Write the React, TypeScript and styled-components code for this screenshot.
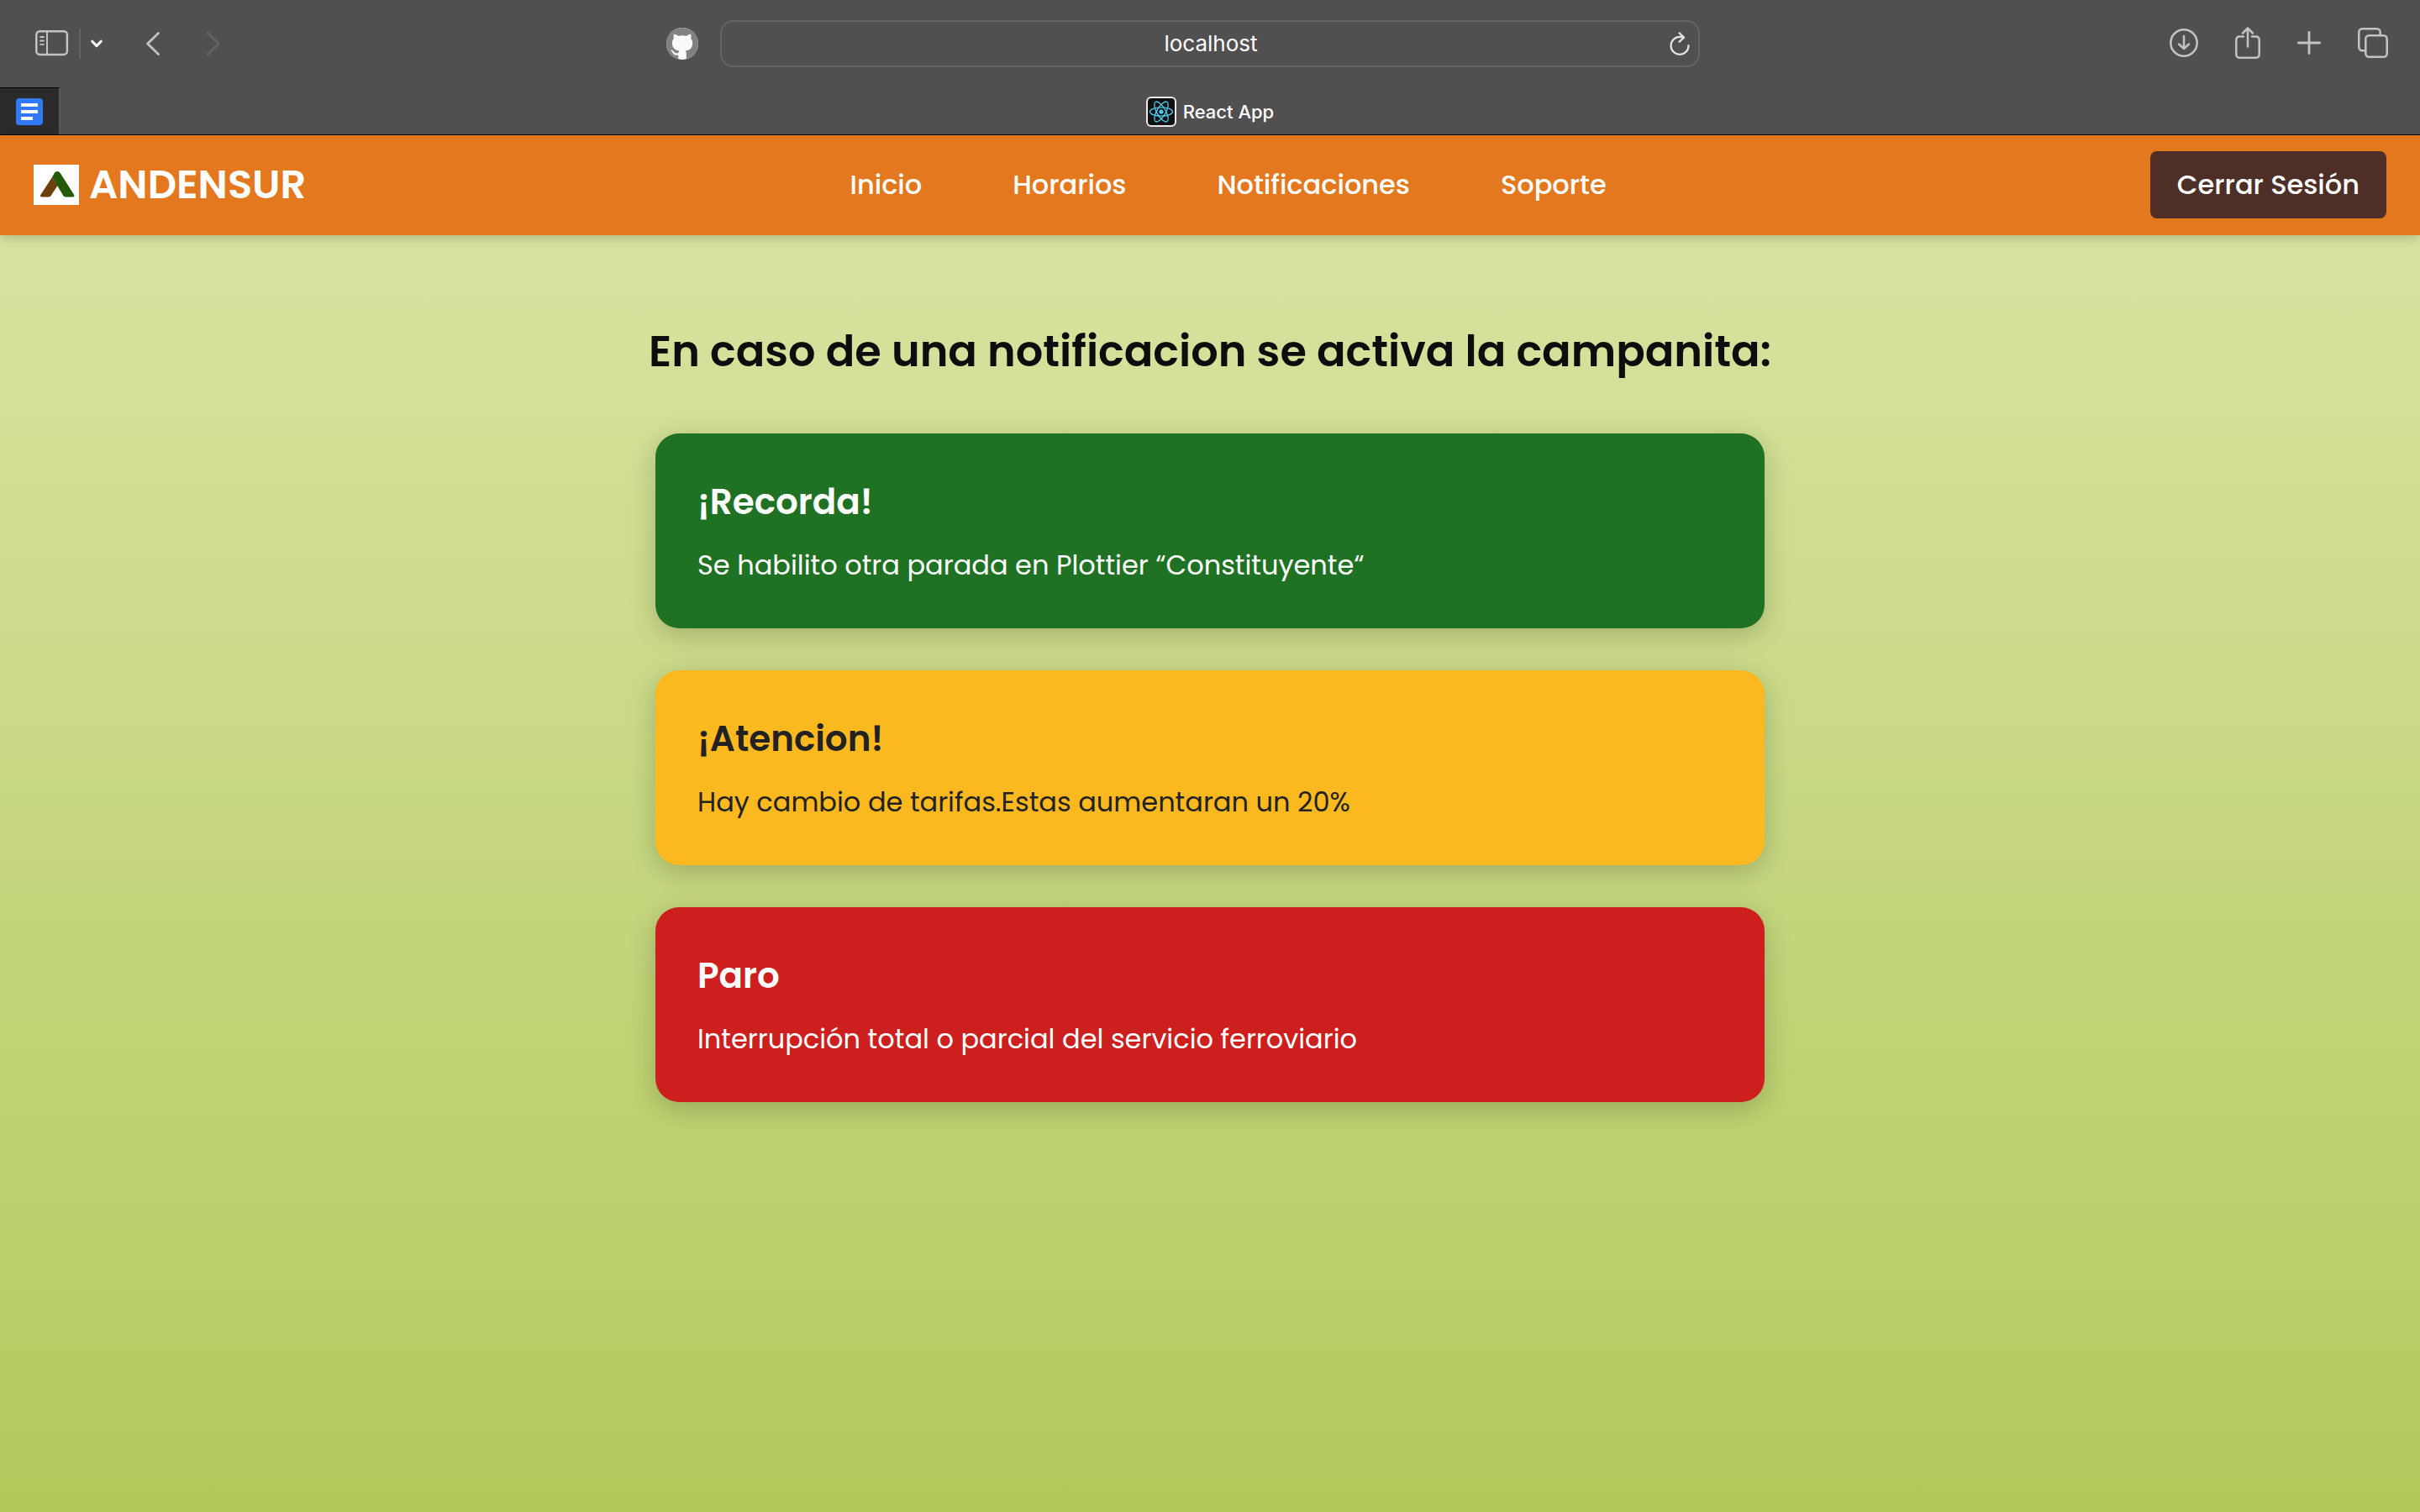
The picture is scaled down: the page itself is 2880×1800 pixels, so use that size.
import React from "react";
import styled, { createGlobalStyle } from "styled-components";

const brandFont = `Poppins, Inter, "Open Sans", sans-serif`;

const GlobalStyle = createGlobalStyle`
  *, *::before, *::after { box-sizing: border-box; }
  html, body, #root { height: 100%; }
  body {
    margin: 0;
    background: #b2ca5d;
    font-family: ${brandFont};
  }
  button { border: 0; padding: 0; background: none; font: inherit; color: inherit; cursor: pointer; }
  svg { display: block; }
`;

const Screen = styled.div`
  min-height: 100%;
  display: flex;
  flex-direction: column;
`;

/* Browser chrome */

const Chrome = styled.div`
  background: #524f50;
  border-bottom: 1px solid #000;
  color: #fff;
  font-family: Inter, sans-serif;
`;

const Toolbar = styled.div`
  display: grid;
  grid-template-columns: 1fr minmax(0, 1166px) 1fr;
  align-items: center;
  height: 104px;
  padding: 0 38px;
`;

const ToolGroup = styled.div<{ $gap: number }>`
  display: flex;
  align-items: center;
  gap: ${(p) => p.$gap}px;
`;

const LeftTools = styled.div`
  display: flex;
  align-items: center;
  justify-content: space-between;
  padding: 0 26px 0 4px;
`;

const RightTools = styled(ToolGroup)`
  justify-content: flex-end;
  padding-bottom: 2px;
`;

const IconButton = styled.button<{ $tone?: string }>`
  color: ${(p) => p.$tone ?? "#c4c2c3"};
  line-height: 0;
`;

const Divider = styled.span`
  width: 2px;
  height: 36px;
  background: #656364;
`;

const GithubBadge = styled.button`
  width: 38px;
  height: 38px;
  border-radius: 50%;
  background: #fafafa;
  color: #828081;
`;

const AddressBar = styled.label`
  display: flex;
  align-items: center;
  height: 56px;
  padding: 0 10px 0 36px;
  border: 2px solid #656364;
  border-radius: 16px;
`;

const AddressInput = styled.input`
  flex: 1;
  min-width: 0;
  border: 0;
  outline: 0;
  background: transparent;
  color: #fff;
  font: 400 26px/32px Inter, sans-serif;
  text-align: center;
`;

const TabRow = styled.div`
  display: grid;
  grid-template-columns: 72px 1fr 72px;
  height: 56px;
`;

const PinnedTab = styled.button`
  display: flex;
  align-items: center;
  justify-content: center;
  border-top: 1px solid #000;
  border-right: 2px solid #5a5758;
  background: #2c2b2b;
`;

const ActiveTab = styled.button`
  display: flex;
  align-items: center;
  justify-content: center;
  gap: 8px;
  padding-top: 2px;
  font-size: 22px;
  line-height: 28px;
  font-weight: 500;
`;

/* Site */

const Header = styled.header`
  position: relative;
  display: flex;
  align-items: center;
  justify-content: space-between;
  padding: 19px 40px 20px;
  background: #e4781e;
  color: #fff;
  box-shadow: 0 4px 12px rgba(0, 0, 0, 0.18);
`;

const Brand = styled.a`
  display: flex;
  align-items: center;
  gap: 12px;
  color: inherit;
  text-decoration: none;
  font-size: 48px;
  line-height: 72px;
  font-weight: 600;
`;

const Nav = styled.nav`
  display: flex;
  gap: 108px;
`;

const NavLink = styled.a`
  color: inherit;
  text-decoration: none;
  font-size: 32px;
  line-height: 48px;
  font-weight: 500;
`;

const LogoutButton = styled.button`
  padding: 16px 32px;
  border-radius: 8px;
  background: #4e2f27;
  font-size: 32px;
  line-height: 48px;
  font-weight: 500;
`;

const Main = styled.main`
  flex: 1;
  display: flex;
  flex-direction: column;
  align-items: center;
  gap: 60px;
  padding: 100px 40px;
  background: linear-gradient(#d8e3a0, #b2ca5c);
`;

const Title = styled.h1`
  margin: 0;
  color: #0d0d0d;
  font-size: 51px;
  line-height: 76px;
  font-weight: 600;
`;

const CardList = styled.section`
  display: flex;
  flex-direction: column;
  gap: 50px;
  width: 100%;
  max-width: 1320px;
`;

const Card = styled.article<{ $background: string; $color: string }>`
  display: flex;
  flex-direction: column;
  gap: 20px;
  padding: 50px;
  border-radius: 28px;
  background: ${(p) => p.$background};
  color: ${(p) => p.$color};
  box-shadow: 0 8px 32px rgba(0, 0, 0, 0.2);
`;

const CardTitle = styled.h2`
  margin: 0;
  font-size: 42px;
  line-height: 64px;
  font-weight: 600;
`;

const CardText = styled.p`
  margin: 0;
  padding-bottom: 2px;
  font-size: 32px;
  line-height: 46px;
`;

const stroke = {
  fill: "none",
  stroke: "currentColor",
  strokeWidth: 2.5,
  strokeLinecap: "round" as const,
  strokeLinejoin: "round" as const,
};

const SidebarIcon = () => (
  <svg width="40" height="32" viewBox="0 0 40 32" {...stroke}>
    <rect x="1.3" y="1.3" width="36.6" height="27.6" rx="4" />
    <path d="M14 1.500v27" strokeWidth="2" />
    <path d="M6 8h4M6 12.500h4M6 16.800h4" strokeWidth="1.8" />
  </svg>
);

const DownIcon = () => (
  <svg width="14" height="10" viewBox="0 0 14 10" {...stroke} strokeWidth="3">
    <path d="M1.8 2.2 7 7.600l5.200-5.400" />
  </svg>
);

const BackIcon = () => (
  <svg width="16" height="28" viewBox="0 0 16 28" {...stroke} strokeWidth="2.8">
    <path d="M14.500 1.500 1.600 14l12.900 12.500" />
  </svg>
);

const ForwardIcon = () => (
  <svg width="16" height="28" viewBox="0 0 16 28" {...stroke} strokeWidth="2.8">
    <path d="M1.500 1.500 14.400 14 1.500 26.500" />
  </svg>
);

const GithubIcon = () => (
  <svg width="38" height="38" viewBox="0 0 16 16" fill="currentColor">
    <path d="M8 0C3.58 0 0 3.58 0 8c0 3.54 2.29 6.53 5.47 7.59.4.07.55-.17.55-.38 0-.19-.01-.82-.01-1.49-2.01.37-2.53-.49-2.69-.94-.09-.23-.48-.94-.82-1.13-.28-.15-.68-.52-.01-.53.63-.01 1.08.58 1.23.82.72 1.21 1.87.87 2.33.66.07-.52.28-.87.51-1.07-1.78-.2-3.64-.89-3.64-3.95 0-.87.31-1.59.82-2.15-.08-.2-.36-1.02.08-2.12 0 0 .67-.21 2.2.82.64-.18 1.32-.27 2-.27s1.36.09 2 .27c1.53-1.04 2.2-.82 2.2-.82.44 1.1.16 1.92.08 2.12.51.56.82 1.27.82 2.15 0 3.07-1.87 3.75-3.65 3.95.29.25.54.73.54 1.48 0 1.07-.01 1.93-.01 2.2 0 .21.15.46.55.38A8.01 8.01 0 0 0 16 8c0-4.42-3.58-8-8-8Z" />
  </svg>
);

const ReloadIcon = () => (
  <svg width="24" height="28" viewBox="0 0 24 28" {...stroke} strokeWidth="2.2">
    <path d="M22.500 16A10.500 10.500 0 1 1 12 5.800q2.500 0 4.500.700" />
    <path d="M11.500 1.300 17 6.600l-5.500 5.200" />
  </svg>
);

const DownloadIcon = () => (
  <svg width="34" height="34" viewBox="0 0 34 34" {...stroke}>
    <circle cx="17" cy="17" r="15.700" />
    <path d="M17 9v15M11 18.500l6 5.500 6-5.500" />
  </svg>
);

const ShareIcon = () => (
  <svg width="30" height="38" viewBox="0 0 30 38" {...stroke}>
    <path d="M10 11.500H5a3.700 3.700 0 0 0-3.700 3.700V33A3.700 3.700 0 0 0 5 36.700h20a3.700 3.700 0 0 0 3.700-3.700V15.200a3.700 3.700 0 0 0-3.700-3.700h-5" />
    <path d="M15 23.500V1.500M9 7.500l6-6 6 6" />
  </svg>
);

const PlusIcon = () => (
  <svg width="28" height="28" viewBox="0 0 28 28" {...stroke} strokeWidth="2.8">
    <path d="M14 1.500v25M1.500 14h25" />
  </svg>
);

const TabsIcon = () => (
  <svg width="36" height="36" viewBox="0 0 36 36" {...stroke}>
    <rect x="9.300" y="9.300" width="25.400" height="25.400" rx="4" />
    <path d="M9 27.300H5.300a4 4 0 0 1-4-4V5.300a4 4 0 0 1 4-4h17.400a4 4 0 0 1 4 4V9" />
  </svg>
);

const DocsIcon = () => (
  <svg width="32" height="32" viewBox="0 0 32 32">
    <rect width="32" height="32" rx="4" fill="#3279f6" />
    <path d="M6 6h20v4H6zM6 14h20v4H6zM6 22h14v4H6z" fill="#fff" />
  </svg>
);

const ReactIcon = () => (
  <svg width="36" height="36" viewBox="0 0 36 36" fill="none">
    <rect x="1" y="1" width="34" height="34" rx="5" fill="#111" stroke="#e9e9e9" strokeWidth="2" />
    <g stroke="#4fc9ec" strokeWidth="1.3">
      <ellipse cx="18" cy="18" rx="13.500" ry="5.200" />
      <ellipse cx="18" cy="18" rx="13.500" ry="5.200" transform="rotate(60 18 18)" />
      <ellipse cx="18" cy="18" rx="13.500" ry="5.200" transform="rotate(120 18 18)" />
    </g>
    <circle cx="18" cy="18" r="2.600" fill="#4fc9ec" />
  </svg>
);

const LogoIcon = () => (
  <svg width="54" height="48" viewBox="0 0 54 48">
    <rect width="54" height="48" fill="#fff" />
    <path d="M22 15 8.300 36c-.800 1.500 0 2.500 1.500 2.500h8.200c1.200 0 2-.400 2.600-1.400L28.500 25z" fill="#6b3f0c" />
    <path d="M22 15l2.500-4.500c1.700-3.300 5.600-3.300 7.500 0L48 35.800c.900 1.500.300 2.700-1.500 2.700H38c-1.200 0-2-.400-2.600-1.400z" fill="#235a08" />
  </svg>
);

const links = ["Inicio", "Horarios", "Notificaciones", "Soporte"];

const notices = [
  {
    title: "¡Recorda!",
    text: "Se habilito otra parada en Plottier “Constituyente“",
    background: "#1f7223",
    color: "#fff",
  },
  {
    title: "¡Atencion!",
    text: "Hay cambio de tarifas.Estas aumentaran un 20%",
    background: "#fbb91f",
    color: "#222",
  },
  {
    title: "Paro",
    text: "Interrupción total o parcial del servicio ferroviario",
    background: "#cc1f1e",
    color: "#fff",
  },
];

export default function App() {
  return (
    <Screen>
      <GlobalStyle />
      <Chrome>
        <Toolbar>
          <LeftTools>
            <ToolGroup $gap={52}>
              <ToolGroup $gap={12}>
                <IconButton aria-label="Sidebar"><SidebarIcon /></IconButton>
                <Divider />
                <IconButton aria-label="Tab groups" $tone="#fff"><DownIcon /></IconButton>
              </ToolGroup>
              <ToolGroup $gap={56}>
                <IconButton aria-label="Back"><BackIcon /></IconButton>
                <IconButton aria-label="Forward" $tone="#656364"><ForwardIcon /></IconButton>
              </ToolGroup>
            </ToolGroup>
            <GithubBadge aria-label="GitHub"><GithubIcon /></GithubBadge>
          </LeftTools>
          <AddressBar>
            <AddressInput aria-label="Address" defaultValue="localhost" />
            <IconButton aria-label="Reload" $tone="#e6e5e5"><ReloadIcon /></IconButton>
          </AddressBar>
          <RightTools $gap={44}>
            <IconButton aria-label="Downloads"><DownloadIcon /></IconButton>
            <IconButton aria-label="Share"><ShareIcon /></IconButton>
            <IconButton aria-label="New tab"><PlusIcon /></IconButton>
            <IconButton aria-label="Tab overview"><TabsIcon /></IconButton>
          </RightTools>
        </Toolbar>
        <TabRow>
          <PinnedTab aria-label="Docs"><DocsIcon /></PinnedTab>
          <ActiveTab><ReactIcon />React App</ActiveTab>
        </TabRow>
      </Chrome>
      <Header>
        <Brand href="#"><LogoIcon />ANDENSUR</Brand>
        <Nav>
          {links.map((link) => (
            <NavLink key={link} href="#">{link}</NavLink>
          ))}
        </Nav>
        <LogoutButton>Cerrar Sesión</LogoutButton>
      </Header>
      <Main>
        <Title>En caso de una notificacion se activa la campanita:</Title>
        <CardList>
          {notices.map((notice) => (
            <Card key={notice.title} $background={notice.background} $color={notice.color}>
              <CardTitle>{notice.title}</CardTitle>
              <CardText>{notice.text}</CardText>
            </Card>
          ))}
        </CardList>
      </Main>
    </Screen>
  );
}
